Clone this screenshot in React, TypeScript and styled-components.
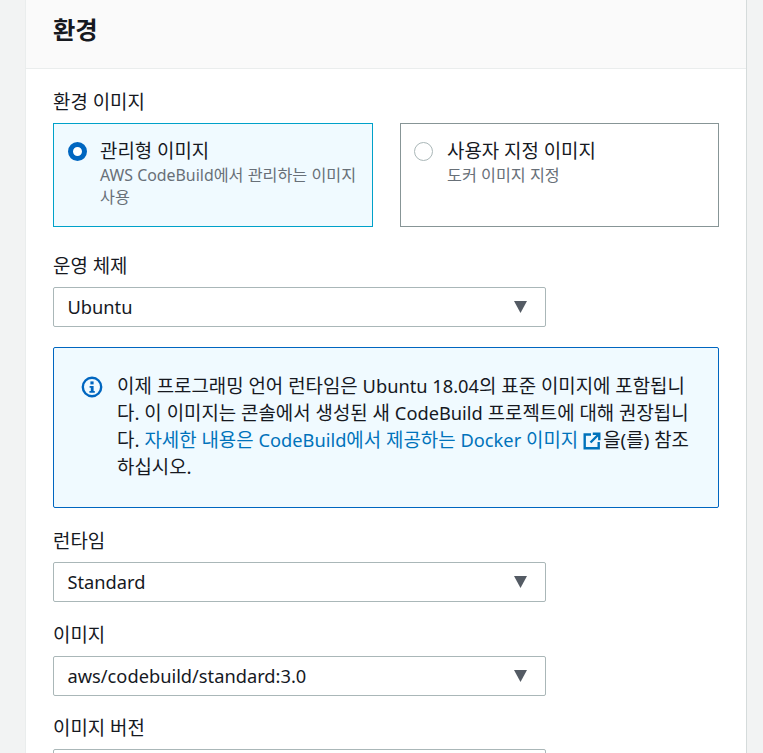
import React from "react";
import styled, { createGlobalStyle } from "styled-components";

const GlobalStyle = createGlobalStyle`
  html, body {
    margin: 0;
    height: 753px;
    overflow: hidden;
    background: #f2f3f3;
    font-family: "Noto Sans", "Noto Sans CJK KR", sans-serif;
    color: #16191f;
    font-size: 18.9px;
    line-height: 27px;
  }
`;

const Page = styled.div`
  padding: 0 16px 0 25px;
`;

const Card = styled.section`
  background: #fff;
  border-left: 1px solid #eaeded;
  border-right: 1px solid #d5dbdb;
`;

const CardHeader = styled.header`
  height: 69px;
  box-sizing: border-box;
  padding: 13px 27px 0;
  background: #fafafa;
  border-bottom: 1px solid #eaeded;
`;

const Title = styled.h2`
  margin: 0;
  font-size: 24.3px;
  line-height: 34px;
  font-weight: 700;
`;

const CardBody = styled.div`
  padding: 19px 27px 0;
  display: flex;
  flex-direction: column;
`;

const Field = styled.div<{ $gap?: number }>`
  margin-bottom: ${(p) => p.$gap ?? 18.7}px;
`;

const Label = styled.div`
  height: 26px;
  padding-top: 1px;
  margin-bottom: 8px;
`;

const Latin = styled.span<{ $size?: number }>`
  font-size: ${(p) => p.$size ?? 18.25}px;
  line-height: 1;
`;

const Tiles = styled.div`
  display: grid;
  grid-template-columns: 320px 319px;
  column-gap: 27px;
`;

const Tile = styled.div<{ $selected?: boolean }>`
  box-sizing: border-box;
  height: 104px;
  display: flex;
  gap: ${(p) => (p.$selected ? 13 : 14)}px;
  padding: 14px 14px 13px ${(p) => (p.$selected ? 14 : 13)}px;
  border: 1px solid ${(p) => (p.$selected ? "#00a1c9" : "#879596")};
  background: ${(p) => (p.$selected ? "#f0faff" : "#fff")};
`;

const Radio = styled.span<{ $selected?: boolean }>`
  flex: none;
  box-sizing: border-box;
  width: 19px;
  height: 19px;
  margin-top: 4px;
  border-radius: 50%;
  border: ${(p) => (p.$selected ? "5.5px solid #0066c0" : "1.5px solid #aab7b8")};
  background: #fff;
`;

const TileText = styled.div`
  display: flex;
  flex-direction: column;
`;

const TileTitle = styled.div``;

const TileDescription = styled.div`
  font-size: 16.2px;
  line-height: 21.6px;
  color: #687078;
`;

const SelectBox = styled.div`
  box-sizing: border-box;
  width: 493px;
  height: 40px;
  display: flex;
  align-items: center;
  justify-content: space-between;
  padding: 0 18px 0 13.5px;
  border: 1px solid #aab7b8;
  border-radius: 2px;
  background: #fff;
`;

const Caret = styled.svg`
  width: 13px;
  height: 12px;
  fill: #545b64;
`;

const Alert = styled.div`
  box-sizing: border-box;
  width: 666px;
  height: 161px;
  margin-bottom: 19px;
  display: flex;
  gap: 14px;
  padding: 25px 24px 0 27px;
  border: 1px solid #0066c0;
  border-radius: 2px;
  background: #f0faff;
`;

const AlertIcon = styled.svg`
  flex: none;
  width: 22px;
  height: 22px;
  margin-top: 3px;
`;

const AlertText = styled.div`
  line-break: anywhere;
`;

const DocLink = styled.a`
  color: #0073bb;
  text-decoration: none;
`;

const ExternalIcon = styled.svg`
  width: 18px;
  height: 18px;
  margin: 0 2px 0 5px;
  vertical-align: -3px;
`;

const Select = ({ value }: { value?: string }) => (
  <SelectBox>
    <Latin>{value}</Latin>
    <Caret viewBox="0 0 13 12">
      <path d="M0 0h13L6.5 12z" />
    </Caret>
  </SelectBox>
);

export default function App() {
  return (
    <Page>
      <GlobalStyle />
      <Card>
        <CardHeader>
          <Title>환경</Title>
        </CardHeader>
        <CardBody>
          <Field $gap={25}>
            <Label>환경 이미지</Label>
            <Tiles>
              <Tile $selected>
                <Radio $selected />
                <TileText>
                  <TileTitle>관리형 이미지</TileTitle>
                  <TileDescription>
                    <Latin $size={15.9}>AWS CodeBuild</Latin>에서 관리하는 이미지 사용
                  </TileDescription>
                </TileText>
              </Tile>
              <Tile>
                <Radio />
                <TileText>
                  <TileTitle>사용자 지정 이미지</TileTitle>
                  <TileDescription>도커 이미지 지정</TileDescription>
                </TileText>
              </Tile>
            </Tiles>
          </Field>
          <Field $gap={20}>
            <Label>운영 체제</Label>
            <Select value="Ubuntu" />
          </Field>
          <Alert>
            <AlertIcon viewBox="0 0 22 22">
              <circle cx="11" cy="11" r="9.2" fill="none" stroke="#0066c0" strokeWidth="2.4" />
              <rect x="9.4" y="5.4" width="3.2" height="3" fill="#0066c0" />
              <path d="M8.6 10h4v5h1.2v1.8H8.4V15h1.4v-3.2H8.6z" fill="#0066c0" />
            </AlertIcon>
            <AlertText>
              이제 프로그래밍 언어 런타임은 <Latin>Ubuntu 18.04</Latin>의 표준 이미지에 포함됩니다. 이 이미지는 콘솔에서 생성된 새 <Latin>CodeBuild</Latin> 프로젝트에 대해 권장됩니다.{" "}
              <DocLink href="#">
                자세한 내용은 <Latin>CodeBuild</Latin>에서 제공하는 <Latin>Docker</Latin> 이미지
                <ExternalIcon viewBox="0 0 18 18" fill="none" stroke="#0073bb" strokeWidth="2.4">
                  <path d="M8 2.5H1.7v13.8h14V10" />
                  <path d="M7.5 10.5l8-8M9.8 1.7h6.5v6.5" />
                </ExternalIcon>
              </DocLink>
              을(를) 참조하십시오.
            </AlertText>
          </Alert>
          <Field>
            <Label>런타임</Label>
            <Select value="Standard" />
          </Field>
          <Field>
            <Label>이미지</Label>
            <Select value="aws/codebuild/standard:3.0" />
          </Field>
          <Field>
            <Label>이미지 버전</Label>
            <Select />
          </Field>
        </CardBody>
      </Card>
    </Page>
  );
}
